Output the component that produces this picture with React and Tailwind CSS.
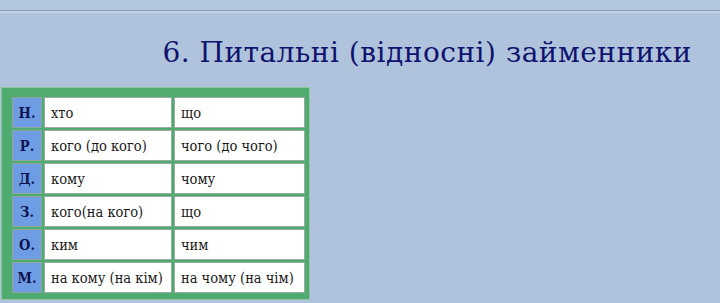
const rows = [
  ["Н.", "хто", "що"],
  ["Р.", "кого (до кого)", "чого (до чого)"],
  ["Д.", "кому", "чому"],
  ["З.", "кого(на кого)", "що"],
  ["О.", "ким", "чим"],
  ["М.", "на кому (на кім)", "на чому (на чім)"],
];

const cellFont = { fontFamily: '"DejaVu Serif Condensed", "DejaVu Serif", serif' };

const App = () => {
  return (
    <div
      className="w-[720px] h-[303px] overflow-hidden bg-[#afc4dc]"
      style={{ fontFamily: '"DejaVu Serif", "Liberation Serif", serif' }}
    >
      <div className="h-[10px] bg-[#b3c7de]" />
      <div className="h-[1px] bg-[#8d9db3]" />
      <div className="h-[2px] bg-[#c2d2e4]" />
      <div className="flex justify-end pr-[28px] pt-[26px]">
        <h1 className="text-[28px] leading-none tracking-[0.5px] text-[#10126e]">
          6. Питальні (відносні) займенники
        </h1>
      </div>
      <div className="mt-[20px] ml-[1px] w-[309px] border border-[#8fc4a0] bg-[#4fab6f] pl-[10px] pt-[9px] pr-[4px] pb-[6px]">
        <div className="grid grid-cols-[30px_128px_131px] auto-rows-[31px] gap-[2px]" style={cellFont}>
          {rows.map(([c, a, b]) => (
            <>
              <div
                key={c}
                className="flex items-center justify-center border border-[#8ea79a] bg-[#6e9de4] text-[14.5px] font-bold text-[#0f1450]"
              >
                {c}
              </div>
              <div className="flex items-center border border-[#9aaca2] bg-white pl-[6px] pt-[2px] text-[14.5px] text-[#1a1a1a]">
                {a}
              </div>
              <div className="flex items-center border border-[#9aaca2] bg-white pl-[6px] pt-[2px] text-[14.5px] text-[#1a1a1a]">
                {b}
              </div>
            </>
          ))}
        </div>
      </div>
    </div>
  );
};

export default App;
